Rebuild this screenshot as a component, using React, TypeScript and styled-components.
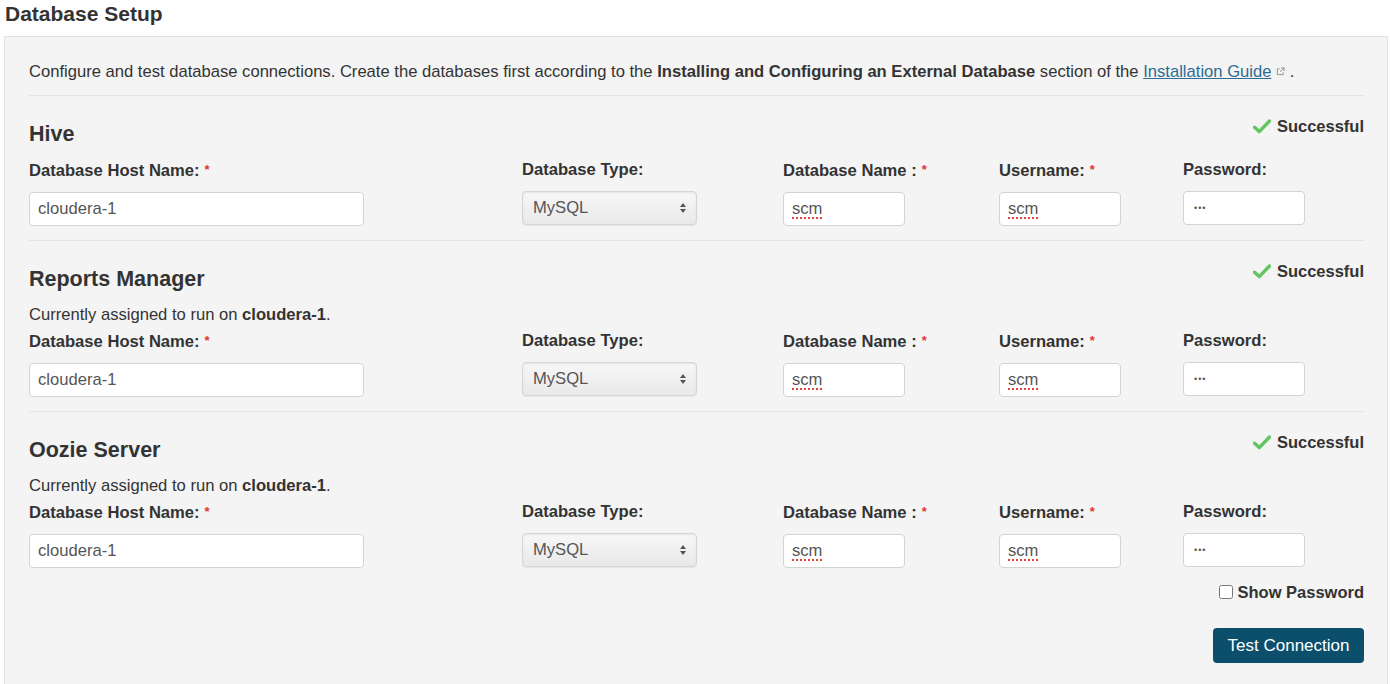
import React from 'react';
import styled, { createGlobalStyle } from 'styled-components';

const GlobalStyle = createGlobalStyle`
  body {
    margin: 0;
    background: #fff;
    font-family: "Liberation Sans", Arial, sans-serif;
    color: #333;
  }
`;

type Field = {
  label: string;
  required: boolean;
  value: string;
  kind: 'text' | 'select' | 'password';
  width: number;
  spell?: boolean;
};

type DbSection = {
  title: string;
  note: boolean;
};

const sections: DbSection[] = [
  { title: 'Hive', note: false },
  { title: 'Reports Manager', note: true },
  { title: 'Oozie Server', note: true },
];

const fields: Field[] = [
  { label: 'Database Host Name:', required: true, value: 'cloudera-1', kind: 'text', width: 335 },
  { label: 'Database Type:', required: false, value: 'MySQL', kind: 'select', width: 175 },
  { label: 'Database Name :', required: true, value: 'scm', kind: 'text', width: 122, spell: true },
  { label: 'Username:', required: true, value: 'scm', kind: 'text', width: 122, spell: true },
  { label: 'Password:', required: false, value: 'scm', kind: 'password', width: 122 },
];

const CheckIcon = () => (
  <svg width="18" height="15" viewBox="0 0 18 15">
    <path d="M1.5 8.2 L6.3 12.6 L16.5 2" fill="none" stroke="#62c462" strokeWidth="3.4" strokeLinecap="round" strokeLinejoin="round" />
  </svg>
);

const ExternalIcon = () => (
  <svg width="9" height="9" viewBox="0 0 10 10">
    <path d="M4 2 H1.5 V8.5 H8 V6" fill="none" stroke="#888" strokeWidth="1" />
    <path d="M5.5 1 H9 V4.5 M9 1 L4.5 5.5" fill="none" stroke="#888" strokeWidth="1" />
  </svg>
);

const SelectArrows = () => (
  <svg width="8" height="12" viewBox="0 0 8 12">
    <path d="M4 1 L7 5 H1 Z" fill="#555" />
    <path d="M4 11 L7 7 H1 Z" fill="#555" />
  </svg>
);

const App = () => {
  return (
    <>
      <GlobalStyle />
      <Title>Database Setup</Title>
      <Panel>
        <Intro>
          Configure and test database connections. Create the databases first according to the{' '}
          <strong>Installing and Configuring an External Database</strong> section of the{' '}
          <GuideLink href="#">Installation Guide</GuideLink> <ExternalIcon /> .
        </Intro>
        {sections.map((section) => (
          <Section key={section.title}>
            <SectionHeader>
              <SectionTitle>{section.title}</SectionTitle>
              <Status>
                <CheckIcon />
                Successful
              </Status>
            </SectionHeader>
            {section.note && (
              <Note>
                Currently assigned to run on <strong>cloudera-1</strong>.
              </Note>
            )}
            <FieldGrid>
              {fields.map((field) => (
                <FieldCell key={field.label}>
                  <Label>
                    {field.label}
                    {field.required && <Required>*</Required>}
                  </Label>
                  {field.kind === 'select' ? (
                    <SelectBox style={{ width: field.width }}>
                      <span>{field.value}</span>
                      <SelectArrows />
                    </SelectBox>
                  ) : (
                    <TextInput
                      type={field.kind === 'password' ? 'password' : 'text'}
                      defaultValue={field.value}
                      readOnly
                      spell={field.spell ? 1 : 0}
                      style={{ width: field.width }}
                    />
                  )}
                </FieldCell>
              ))}
            </FieldGrid>
          </Section>
        ))}
        <Footer>
          <CheckLabel>
            <CheckBox type="checkbox" />
            Show Password
          </CheckLabel>
          <PrimaryButton>Test Connection</PrimaryButton>
        </Footer>
      </Panel>
    </>
  );
};

const Title = styled.h2`
  margin: 0 0 11px;
  padding: 3px 5px 0;
  font-size: 21px;
  line-height: 22px;
  font-weight: bold;
  color: #333;
`;

const Panel = styled.div`
  margin-left: 4px;
  width: 1384px;
  box-sizing: border-box;
  background: #f4f4f4;
  border: 1px solid #e2e2e2;
  padding: 25px 23px 40px 24px;
`;

const Intro = styled.p`
  margin: 0 0 13px;
  font-size: 16.6px;
  line-height: 20px;
  color: #333;

  strong {
    font-weight: bold;
  }

  svg {
    vertical-align: 1px;
  }
`;

const GuideLink = styled.a`
  color: #2b6d93;
  text-decoration: underline;
`;

const Section = styled.div`
  border-top: 1px solid #e4e4e4;
  padding: 20px 0 14px;
`;

const SectionHeader = styled.div`
  display: flex;
  justify-content: space-between;
  align-items: flex-start;
  margin-bottom: 14px;
`;

const SectionTitle = styled.h3`
  margin: 6px 0 0;
  font-size: 21.5px;
  line-height: 24px;
  font-weight: bold;
  color: #333;
`;

const Status = styled.div`
  display: flex;
  align-items: center;
  gap: 6px;
  margin-top: 1px;
  font-size: 16.5px;
  line-height: 18px;
  font-weight: bold;
  color: #333;
`;

const Note = styled.div`
  font-size: 16.6px;
  line-height: 20px;
  margin-bottom: 6px;
`;

const FieldGrid = styled.div`
  display: grid;
  grid-template-columns: 493px 261px 216px 184px 1fr;
`;

const FieldCell = styled.div`
  display: flex;
  flex-direction: column;
  gap: 11px;
`;

const Label = styled.label`
  font-size: 16.6px;
  line-height: 20px;
  font-weight: bold;
  color: #333;
`;

const Required = styled.span`
  color: #e0342f;
  font-size: 13px;
  margin-left: 5px;
  vertical-align: 2px;
`;

const TextInput = styled.input<{ spell: number }>`
  box-sizing: border-box;
  height: 34px;
  padding: 0 8px;
  border: 1px solid #d4d4d4;
  border-radius: 4px;
  background: #fff;
  font-family: "Liberation Sans", Arial, sans-serif;
  font-size: 16.6px;
  color: #555;
  outline: none;
  text-decoration: ${({ spell }) => (spell ? 'underline dotted #e2453c' : 'none')};
  text-decoration-thickness: 2px;
  text-underline-offset: 3px;

  &[type='password'] {
    font-size: 9px;
    letter-spacing: 1px;
    padding-left: 10px;
  }
`;

const SelectBox = styled.div`
  box-sizing: border-box;
  height: 34px;
  padding: 0 9px 0 10px;
  display: flex;
  align-items: center;
  justify-content: space-between;
  border: 1px solid #d6d6d6;
  border-radius: 4px;
  background: linear-gradient(#f7f7f7, #e9e9e9);
  box-shadow: inset 0 1px 2px rgba(0, 0, 0, 0.08), 0 1px 1px rgba(0, 0, 0, 0.06);
  font-size: 16.6px;
  color: #555;
`;

const Footer = styled.div`
  display: flex;
  flex-direction: column;
  align-items: flex-end;
  gap: 26px;
`;

const CheckLabel = styled.label`
  display: flex;
  align-items: center;
  gap: 4px;
  font-size: 16.5px;
  line-height: 20px;
  font-weight: bold;
  color: #333;
`;

const CheckBox = styled.input`
  margin: 0;
  width: 14px;
  height: 14px;
`;

const PrimaryButton = styled.button`
  width: 151px;
  height: 35px;
  border: none;
  border-radius: 4px;
  background: #0b4f6c;
  color: #fff;
  font-family: "Liberation Sans", Arial, sans-serif;
  font-size: 17px;
  cursor: pointer;
`;

export default App;
